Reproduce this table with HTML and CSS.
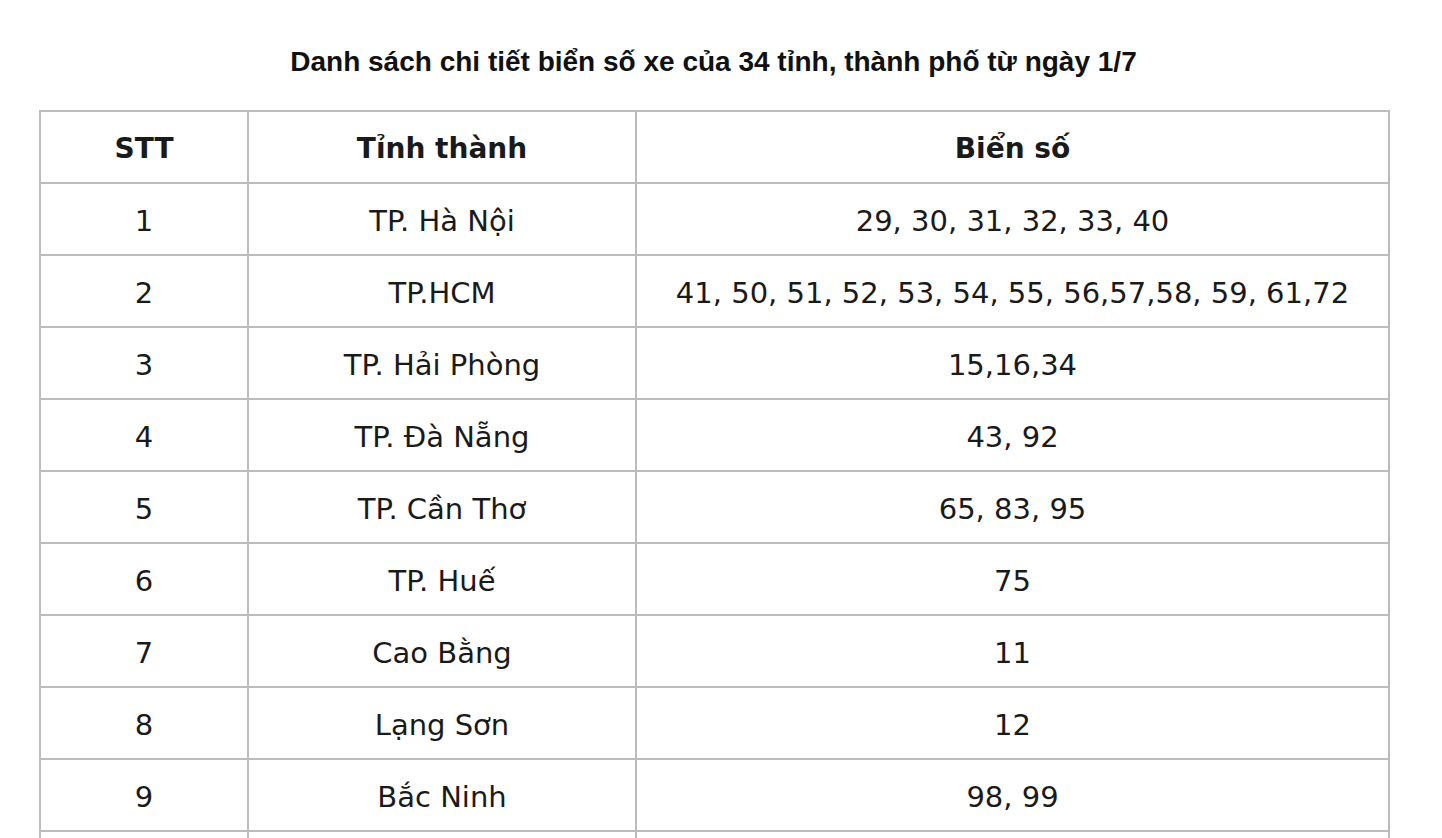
FILE: index.html
```html
<!DOCTYPE html>
<html lang="vi">
<head>
<meta charset="utf-8">
<link rel="stylesheet" href="styles.css">
</head>
<body>
<div class="page">
  <h1 class="title">Danh sách chi tiết biển số xe của 34 tỉnh, thành phố từ ngày 1/7</h1>
  <table class="plates">
    <colgroup>
      <col class="c1"><col class="c2"><col class="c3">
    </colgroup>
    <thead>
      <tr><th>STT</th><th>Tỉnh thành</th><th>Biển số</th></tr>
    </thead>
    <tbody>
      <tr><td>1</td><td>TP. Hà Nội</td><td>29, 30, 31, 32, 33, 40</td></tr>
      <tr><td>2</td><td>TP.HCM</td><td>41, 50, 51, 52, 53, 54, 55, 56,57,58, 59, 61,72</td></tr>
      <tr><td>3</td><td>TP. Hải Phòng</td><td>15,16,34</td></tr>
      <tr><td>4</td><td>TP. Đà Nẵng</td><td>43, 92</td></tr>
      <tr><td>5</td><td>TP. Cần Thơ</td><td>65, 83, 95</td></tr>
      <tr><td>6</td><td>TP. Huế</td><td>75</td></tr>
      <tr><td>7</td><td>Cao Bằng</td><td>11</td></tr>
      <tr><td>8</td><td>Lạng Sơn</td><td>12</td></tr>
      <tr><td>9</td><td>Bắc Ninh</td><td>98, 99</td></tr>
      <tr><td></td><td></td><td></td></tr>
    </tbody>
  </table>
</div>
</body>
</html>
```
FILE: styles.css
```css
html, body {
  margin: 0;
  padding: 0;
  background: #fff;
  overflow: hidden;
}
.page {
  padding: 0 0 0 39px;
  width: 1349px;
}
.title {
  margin: 0;
  padding: 47px 0 33px;
  font-family: "Liberation Sans", Arial, sans-serif;
  font-weight: bold;
  font-size: 28px;
  line-height: 30px;
  color: #111;
  text-align: center;
}
.plates {
  width: 1349px;
  border-collapse: collapse;
  table-layout: fixed;
  font-family: "DejaVu Sans", Verdana, sans-serif;
  font-size: 29px;
  color: #1a1a1a;
}
.c1 { width: 208px; }
.c2 { width: 388px; }
.c3 { width: 753px; }
.plates th, .plates td {
  border: 2px solid #bcbcbc;
  height: 72px;
  padding: 3px 0 0;
  text-align: center;
  vertical-align: middle;
  box-sizing: border-box;
}
.plates th {
  font-weight: bold;
  font-size: 28px;
}
```
